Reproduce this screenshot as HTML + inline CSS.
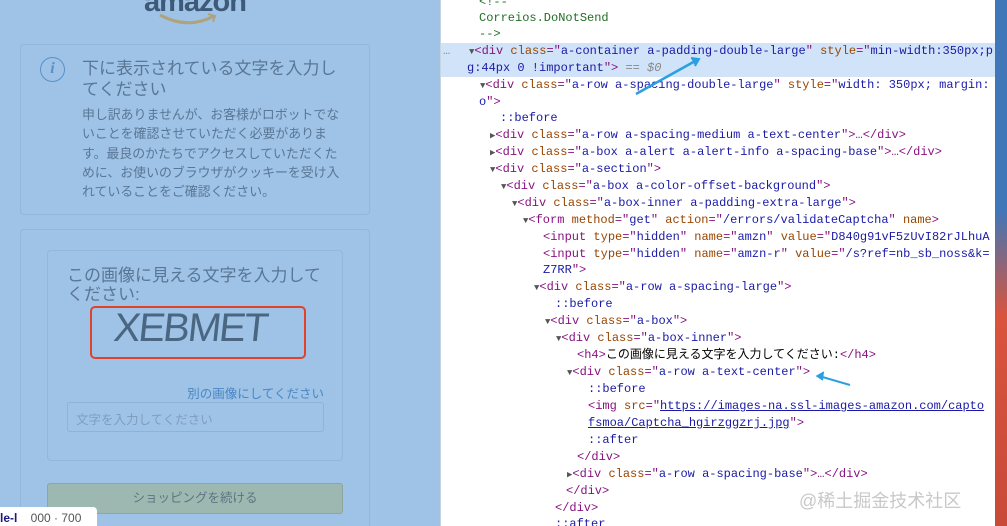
<!DOCTYPE html>
<html style="width:1007px;height:526px;overflow:hidden"><head><meta charset="utf-8"><style>
*{margin:0;padding:0;box-sizing:border-box}
body{width:1007px;height:526px;overflow:hidden;position:relative;background:#fff;font-family:"Liberation Sans","Noto Sans CJK JP",sans-serif}
#left{position:absolute;left:0;top:0;width:440px;height:526px;background:#9ec3e7;overflow:hidden}
.box{position:absolute;border:1px solid #93b6da;border-radius:4px}
.jp{color:#5a7694;font-family:"Liberation Sans","Noto Sans CJK JP",sans-serif}
#right{position:absolute;left:441px;top:0;width:554px;height:526px;background:#fff;font-family:"Liberation Mono",monospace;font-size:12px;white-space:pre;overflow:hidden}
.l{position:absolute;height:17px;line-height:17px}
.t{color:#881280}.a{color:#994500}.v{color:#1a1aa6}.c{color:#236e25}.p{color:#1a1aa6}.g{color:#888}
.tri{color:#555;font-size:9px}
</style></head><body>
<div id="left">
 <div style="position:absolute;left:144px;top:-14px;font:bold 29px 'Liberation Sans',sans-serif;color:#3e5a78;letter-spacing:-1px">amazon</div>
 <svg style="position:absolute;left:158px;top:12px" width="60" height="16"><path d="M2 3 Q30 18 56 4" stroke="#b0a27c" stroke-width="3" fill="none"/><path d="M50 2 L57 4 L55 10" stroke="#b0a27c" stroke-width="2" fill="none"/></svg>
 <div class="box" style="left:20px;top:44px;width:350px;height:171px"></div>
 <div style="position:absolute;left:40px;top:57px;width:25px;height:25px;border:1.5px solid #5a90c8;border-radius:50%;color:#5a90c8;font:italic bold 16px 'Liberation Serif',serif;text-align:center;line-height:22px">i</div>
 <div class="jp" style="position:absolute;left:82px;top:58px;width:258px;font-size:17px;line-height:21px">下に表示されている文字を入力してください</div>
 <div class="jp" style="position:absolute;left:82px;top:105px;width:262px;font-size:12.9px;line-height:19.3px">申し訳ありませんが、お客様がロボットでないことを確認させていただく必要があります。最良のかたちでアクセスしていただくために、お使いのブラウザがクッキーを受け入れていることをご確認ください。</div>
 <div class="box" style="left:20px;top:229px;width:350px;height:320px"></div>
 <div class="box" style="left:47px;top:250px;width:296px;height:211px"></div>
 <div class="jp" style="position:absolute;left:67px;top:266px;width:258px;font-size:17px;line-height:19px">この画像に見える文字を入力してください:</div>
 <div style="position:absolute;left:90px;top:306px;width:216px;height:53px;border:2.5px solid #e0432a;border-radius:5px"></div>
 <div style="position:absolute;left:114px;top:306px;font:40px 'Liberation Sans',sans-serif;color:#4a6680;letter-spacing:-2px;transform:skewX(-6deg)">XEBMET</div>
 <div style="position:absolute;left:180px;top:383px;width:144px;text-align:right;font-size:12.5px;color:#4a86c4">別の画像にしてください</div>
 <div style="position:absolute;left:67px;top:402px;width:257px;height:30px;border:1px solid #8fb2d6;border-radius:3px;font-size:12.5px;color:#7f9dbd;padding:6px 8px">文字を入力してください</div>
 <div style="position:absolute;left:47px;top:483px;width:296px;height:31px;background:#9cb8b0;border:1px solid #8aa7a0;border-radius:3px;text-align:center;line-height:29px;font-size:12.5px;color:#5e7482">ショッピングを続ける</div>
 <div style="position:absolute;left:0;top:507px;width:97px;height:19px;background:#fff;border-radius:0 4px 0 0;font:bold 12px 'Liberation Sans',sans-serif;color:#1a1a7a;padding:4px 0 0 0">le-l <span style="color:#555;font-weight:normal;margin-left:10px">000 · 700</span></div>
</div>
<div style="position:absolute;left:440px;top:0;width:1px;height:526px;background:#c8d4e0"></div>
<div style="position:absolute;left:995px;top:0;width:12px;height:526px;background:linear-gradient(#3f77b8 0,#3f77b8 40%,#d9543d 60%,#c84a38 100%)"></div>
<div id="right">
 <div style="position:absolute;left:0;top:43px;width:554px;height:34px;background:#d0e3f8"></div>
 <div class="l c" style="left:38px;top:-6px">&lt;!--</div>
 <div class="l c" style="left:38px;top:10px">Correios.DoNotSend</div>
 <div class="l c" style="left:38px;top:26px">--&gt;</div>
 <div class="l g" style="left:2px;top:43px">…</div>
 <div class="l" style="left:28px;top:43px"><span class="tri">▼</span><span class="t">&lt;div </span><span class="a">class</span><span class="t">="</span><span class="v">a-container a-padding-double-large</span><span class="t">"</span> <span class="a">style</span><span class="t">="</span><span class="v">min-width:350px;p</span></div>
 <div class="l" style="left:26px;top:60px"><span class="v">g:44px 0 !important</span><span class="t">"&gt;</span> <span class="g">== <i>$0</i></span></div>
 <div class="l" style="left:39px;top:77px"><span class="tri">▼</span><span class="t">&lt;div </span><span class="a">class</span><span class="t">="</span><span class="v">a-row a-spacing-double-large</span><span class="t">"</span> <span class="a">style</span><span class="t">="</span><span class="v">width: 350px; margin:</span></div>
 <div class="l" style="left:38px;top:94px"><span class="v">o</span><span class="t">"&gt;</span></div>
 <div class="l p" style="left:59px;top:110px">::before</div>
 <div class="l" style="left:49px;top:127px"><span class="tri">▶</span><span class="t">&lt;div </span><span class="a">class</span><span class="t">="</span><span class="v">a-row a-spacing-medium a-text-center</span><span class="t">"&gt;…&lt;/div&gt;</span></div>
 <div class="l" style="left:49px;top:144px"><span class="tri">▶</span><span class="t">&lt;div </span><span class="a">class</span><span class="t">="</span><span class="v">a-box a-alert a-alert-info a-spacing-base</span><span class="t">"&gt;…&lt;/div&gt;</span></div>
 <div class="l" style="left:49px;top:161px"><span class="tri">▼</span><span class="t">&lt;div </span><span class="a">class</span><span class="t">="</span><span class="v">a-section</span><span class="t">"&gt;</span></div>
 <div class="l" style="left:60px;top:178px"><span class="tri">▼</span><span class="t">&lt;div </span><span class="a">class</span><span class="t">="</span><span class="v">a-box a-color-offset-background</span><span class="t">"&gt;</span></div>
 <div class="l" style="left:71px;top:195px"><span class="tri">▼</span><span class="t">&lt;div </span><span class="a">class</span><span class="t">="</span><span class="v">a-box-inner a-padding-extra-large</span><span class="t">"&gt;</span></div>
 <div class="l" style="left:82px;top:212px"><span class="tri">▼</span><span class="t">&lt;form </span><span class="a">method</span><span class="t">="</span><span class="v">get</span><span class="t">"</span> <span class="a">action</span><span class="t">="</span><span class="v">/errors/validateCaptcha</span><span class="t">"</span> <span class="a">name</span><span class="t">&gt;</span></div>
 <div class="l" style="left:102px;top:229px"><span class="t">&lt;input </span><span class="a">type</span><span class="t">="</span><span class="v">hidden</span><span class="t">"</span> <span class="a">name</span><span class="t">="</span><span class="v">amzn</span><span class="t">"</span> <span class="a">value</span><span class="t">="</span><span class="v">D840g91vF5zUvI82rJLhuA</span></div>
 <div class="l" style="left:102px;top:246px"><span class="t">&lt;input </span><span class="a">type</span><span class="t">="</span><span class="v">hidden</span><span class="t">"</span> <span class="a">name</span><span class="t">="</span><span class="v">amzn-r</span><span class="t">"</span> <span class="a">value</span><span class="t">="</span><span class="v">/s?ref=nb_sb_noss&amp;k=</span></div>
 <div class="l" style="left:102px;top:262px"><span class="v">Z7RR</span><span class="t">"&gt;</span></div>
 <div class="l" style="left:93px;top:279px"><span class="tri">▼</span><span class="t">&lt;div </span><span class="a">class</span><span class="t">="</span><span class="v">a-row a-spacing-large</span><span class="t">"&gt;</span></div>
 <div class="l p" style="left:114px;top:296px">::before</div>
 <div class="l" style="left:104px;top:313px"><span class="tri">▼</span><span class="t">&lt;div </span><span class="a">class</span><span class="t">="</span><span class="v">a-box</span><span class="t">"&gt;</span></div>
 <div class="l" style="left:115px;top:330px"><span class="tri">▼</span><span class="t">&lt;div </span><span class="a">class</span><span class="t">="</span><span class="v">a-box-inner</span><span class="t">"&gt;</span></div>
 <div class="l" style="left:136px;top:347px;font-family:'Liberation Mono','Noto Sans CJK JP',monospace"><span class="t">&lt;h4&gt;</span>この画像に見える文字を入力してください:<span class="t">&lt;/h4&gt;</span></div>
 <div class="l" style="left:126px;top:364px"><span class="tri">▼</span><span class="t">&lt;div </span><span class="a">class</span><span class="t">="</span><span class="v">a-row a-text-center</span><span class="t">"&gt;</span></div>
 <div class="l p" style="left:147px;top:381px">::before</div>
 <div class="l" style="left:147px;top:398px"><span class="t">&lt;img </span><span class="a">src</span><span class="t">="</span><span class="v" style="text-decoration:underline">https://images-na.ssl-images-amazon.com/capto</span></div>
 <div class="l" style="left:147px;top:415px"><span class="v" style="text-decoration:underline">fsmoa/Captcha_hgirzggzrj.jpg</span><span class="t">"&gt;</span></div>
 <div class="l p" style="left:147px;top:432px">::after</div>
 <div class="l t" style="left:136px;top:449px">&lt;/div&gt;</div>
 <div class="l" style="left:126px;top:466px"><span class="tri">▶</span><span class="t">&lt;div </span><span class="a">class</span><span class="t">="</span><span class="v">a-row a-spacing-base</span><span class="t">"&gt;…&lt;/div&gt;</span></div>
 <div class="l t" style="left:125px;top:483px">&lt;/div&gt;</div>
 <div class="l t" style="left:114px;top:500px">&lt;/div&gt;</div>
 <div class="l p" style="left:114px;top:516px">::after</div>
 <div style="position:absolute;left:358px;top:487px;font:18px 'Liberation Sans','Noto Sans CJK SC',sans-serif;color:#c8c8c8">@稀土掘金技术社区</div>
 <svg style="position:absolute;left:0;top:0" width="554" height="526"><path d="M195 94 L256 60" stroke="#2aa0e0" stroke-width="2.5"/><path d="M250 58 L258 59 L254 66" stroke="#2aa0e0" stroke-width="2" fill="#2aa0e0"/><path d="M409 385 L378 376" stroke="#2aa0e0" stroke-width="2"/><path d="M383 372 L376 376 L382 380" stroke="#2aa0e0" stroke-width="1.5" fill="#2aa0e0"/></svg>
</div>
</body></html>
